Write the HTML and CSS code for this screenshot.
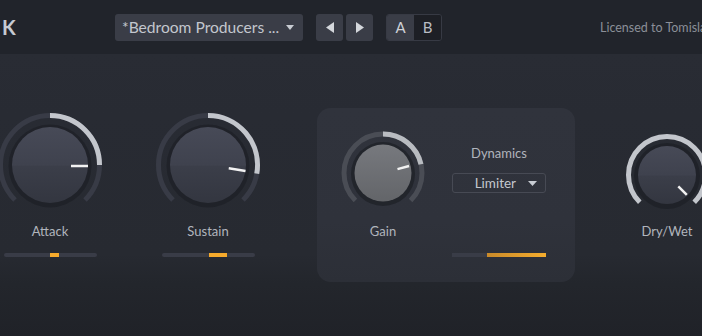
FILE: index.html
```html
<!DOCTYPE html>
<html>
<head>
<meta charset="utf-8">
<link rel="stylesheet" href="styles.css">
</head>
<body>
<div class="app">
  <header class="header">
    <div class="logo">K</div>
    <div class="preset">
      <span class="preset-name">*Bedroom Producers ...</span>
      <svg class="caret" width="8" height="5" viewBox="0 0 8 5"><polygon points="0,0 8,0 4,5" fill="#c8ccd3"/></svg>
    </div>
    <div class="nav">
      <div class="nav-btn"><svg width="8" height="11" viewBox="0 0 8 11"><polygon points="8,0 8,11 0,5.5" fill="#d4d7dc"/></svg></div>
      <div class="nav-btn"><svg width="8" height="11" viewBox="0 0 8 11"><polygon points="0,0 0,11 8,5.5" fill="#d4d7dc"/></svg></div>
    </div>
    <div class="ab">
      <div class="ab-a">A</div>
      <div class="ab-b">B</div>
    </div>
    <div class="license">Licensed to Tomislav</div>
  </header>

  <main class="main">
    <section class="col big">
      <svg class="knob" width="110" height="110" viewBox="0 0 110 110">
        <defs>
          <linearGradient id="gDark" x1="0" y1="0" x2="0" y2="1">
            <stop offset="0" stop-color="#474a57"/>
            <stop offset="0.5" stop-color="#3f424e"/>
            <stop offset="0.52" stop-color="#3b3e49"/>
            <stop offset="1" stop-color="#333640"/>
          </linearGradient>
          <linearGradient id="gGrey" x1="0" y1="0" x2="0" y2="1">
            <stop offset="0" stop-color="#77797e"/>
            <stop offset="1" stop-color="#636569"/>
          </linearGradient>
        </defs>
        <path d="M20 90 A49.5 49.5 0 1 1 90 90" fill="none" stroke="#383b46" stroke-width="5"/>
        <path d="M55 5.5 A49.5 49.5 0 0 1 104.5 55" fill="none" stroke="#c3c6cc" stroke-width="5"/>
        <circle cx="55" cy="56" r="41.5" fill="#1d1f25" opacity="0.7"/>
        <circle cx="55" cy="55" r="38" fill="url(#gDark)"/>
        <line x1="76" y1="56" x2="93" y2="56" stroke="#f2f2f2" stroke-width="2.5"/>
      </svg>
      <div class="label">Attack</div>
      <div class="slider"><div class="thumb" style="margin-left:46px;width:9px"></div></div>
    </section>

    <section class="col big">
      <svg class="knob" width="110" height="110" viewBox="0 0 110 110">
        <path d="M20 90 A49.5 49.5 0 1 1 90 90" fill="none" stroke="#383b46" stroke-width="5"/>
        <path d="M55 5.5 A49.5 49.5 0 0 1 103.75 63.59" fill="none" stroke="#c3c6cc" stroke-width="5"/>
        <circle cx="55" cy="56" r="41.5" fill="#1d1f25" opacity="0.7"/>
        <circle cx="55" cy="55" r="38" fill="url(#gDark)"/>
        <line x1="75.74" y1="58.28" x2="92.53" y2="60.94" stroke="#f2f2f2" stroke-width="2.5"/>
      </svg>
      <div class="label">Sustain</div>
      <div class="slider"><div class="thumb" style="margin-left:47px;width:18px"></div></div>
    </section>

    <section class="panel">
      <div class="gain-col">
        <svg class="knob" width="90" height="90" viewBox="0 0 90 90">
          <path d="M17.42 72.58 A39 39 0 1 1 72.58 72.58" fill="none" stroke="#4a4d55" stroke-width="5"/>
          <path d="M45 6 A39 39 0 0 1 83 36.22" fill="none" stroke="#b9bcc1" stroke-width="5"/>
          <circle cx="45" cy="46" r="32" fill="#1d1f25" opacity="0.7"/>
          <circle cx="45" cy="45" r="28.5" fill="url(#gGrey)"/>
          <line x1="59.49" y1="41.12" x2="71.08" y2="38.01" stroke="#f2f2f2" stroke-width="2.5"/>
        </svg>
        <div class="label">Gain</div>
      </div>
      <div class="dyn-col">
        <div class="label">Dynamics</div>
        <div class="select">
          <span>Limiter</span>
          <svg width="9" height="5" viewBox="0 0 9 5"><polygon points="0,0 9,0 4.5,5" fill="#c8ccd3"/></svg>
        </div>
        <div class="dyn-bar"><div class="dyn-fill"></div></div>
      </div>
    </section>

    <section class="col small">
      <svg class="knob" width="90" height="90" viewBox="0 0 90 90">
        <path d="M17.78 72.22 A38.5 38.5 0 1 1 72.22 72.22" fill="none" stroke="#c3c6cc" stroke-width="5"/>
        <circle cx="45" cy="46" r="33" fill="#1d1f25" opacity="0.7"/>
        <circle cx="45" cy="45" r="29" fill="url(#gDark)"/>
        <line x1="56.31" y1="56.31" x2="64.8" y2="64.8" stroke="#f2f2f2" stroke-width="2.5"/>
      </svg>
      <div class="label">Dry/Wet</div>
    </section>
  </main>
</div>
</body>
</html>
```

FILE: styles.css
```css
html, body {
  margin: 0;
  padding: 0;
  background: #22252c;
}
body {
  width: 702px;
  height: 336px;
  overflow: hidden;
  font-family: "Lato", "Noto Sans", sans-serif;
}
.app {
  width: 702px;
  height: 336px;
  display: flex;
  flex-direction: column;
}
.header {
  height: 54px;
  flex: none;
  background: #21242b;
  display: flex;
  align-items: center;
}
.header > * {
  flex: none;
}
.logo {
  margin-left: 2px;
  width: 16px;
  color: #c6cad2;
  font-weight: 700;
  font-size: 20px;
}
.preset {
  margin-left: 97px;
  width: 188px;
  height: 27px;
  background: #3a3d47;
  border-radius: 3px;
  display: flex;
  align-items: center;
  box-sizing: border-box;
  padding: 0 9px 0 7px;
  justify-content: space-between;
}
.preset-name {
  color: #c3c7ce;
  font-size: 15.6px;
  white-space: nowrap;
}
.nav {
  margin-left: 13px;
  display: flex;
  gap: 3px;
}
.nav-btn {
  width: 27px;
  height: 27px;
  background: #3a3d47;
  border-radius: 3px;
  display: flex;
  align-items: center;
  justify-content: center;
}
.ab {
  margin-left: 13px;
  width: 56px;
  height: 27px;
  box-sizing: border-box;
  border: 1px solid #373a44;
  border-radius: 3px;
  display: flex;
  overflow: hidden;
}
.ab-a, .ab-b {
  flex: 1;
  display: flex;
  align-items: center;
  justify-content: center;
  font-size: 15px;
}
.ab-a {
  background: #3a3d47;
  color: #cdd0d6;
}
.ab-b {
  background: #1d1f25;
  color: #b9bdc4;
}
.license {
  margin-left: 158px;
  color: #8b8f98;
  font-size: 12.5px;
  white-space: nowrap;
}
.main {
  flex: 1;
  display: flex;
  align-items: flex-start;
  background: linear-gradient(to bottom, #292c34 0px, #282b33 60px, #272a31 200px, #23262c 230px, #202228 282px);
}
.col {
  display: flex;
  flex-direction: column;
  align-items: center;
  flex: none;
}
.col.big {
  width: 110px;
  padding-top: 56px;
}
.col.big:first-child {
  margin-left: -5px;
}
.col.big + .col.big {
  margin-left: 48px;
}
.col.small {
  width: 90px;
  padding-top: 76px;
  margin-left: 47px;
}
.knob {
  display: block;
  flex: none;
}
.label {
  color: #b1b5bd;
  font-size: 13px;
  line-height: 16px;
  text-align: center;
}
.col .label {
  margin-top: 3px;
}
.slider {
  margin-top: 14px;
  width: 93px;
  height: 4px;
  background: #393c47;
  border-radius: 2px;
  display: flex;
}
.thumb {
  height: 4px;
  background: #f5aa2c;
}
.panel {
  margin-left: 54px;
  margin-top: 54px;
  width: 258px;
  height: 174px;
  box-sizing: border-box;
  border-radius: 14px;
  background: linear-gradient(to bottom, #30333c 0%, #2f323b 65%, #2c2f37 100%);
  display: flex;
  flex: none;
  padding-left: 21px;
}
.gain-col {
  width: 90px;
  padding-top: 20px;
  display: flex;
  flex-direction: column;
  align-items: center;
}
.gain-col .label {
  margin-top: 5px;
}
.dyn-col {
  margin-left: 24px;
  width: 94px;
  padding-top: 37px;
  display: flex;
  flex-direction: column;
  align-items: center;
}
.select {
  margin-top: 12px;
  width: 94px;
  height: 20px;
  box-sizing: border-box;
  border: 1px solid #474a54;
  border-radius: 3px;
  display: flex;
  align-items: center;
  justify-content: flex-end;
  gap: 12px;
  padding-right: 8px;
  color: #c3c7ce;
  font-size: 13.5px;
}
.dyn-bar {
  margin-top: 60px;
  width: 94px;
  height: 4px;
  background: #393c47;
  display: flex;
  justify-content: flex-end;
}
.dyn-fill {
  width: 59px;
  height: 4px;
  background: linear-gradient(to right, #c98a2a, #f5ad2e);
}
```
